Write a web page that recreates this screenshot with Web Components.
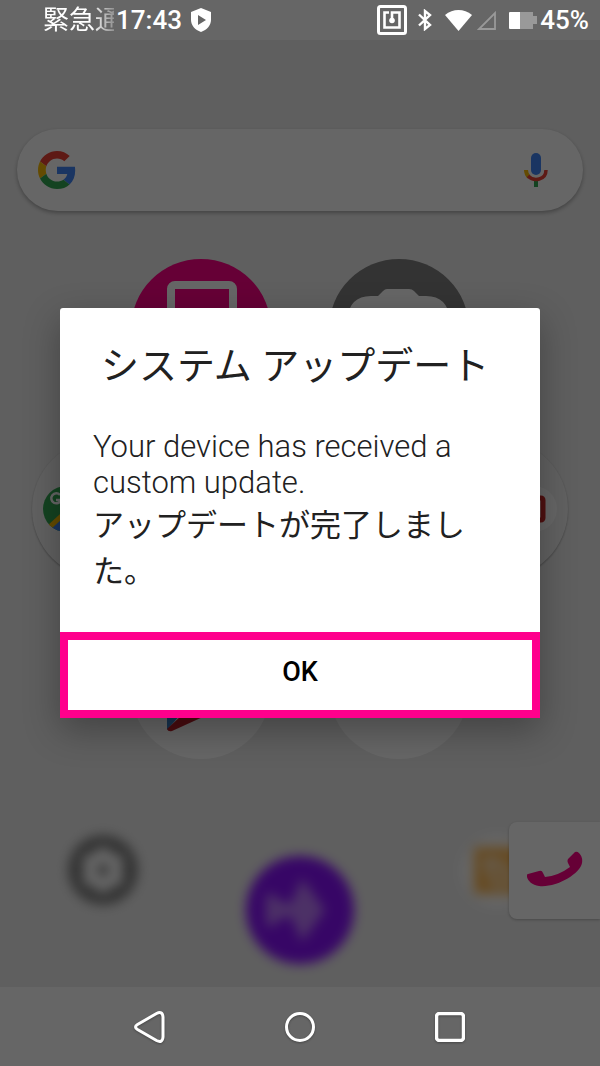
<!DOCTYPE html>
<html lang="ja">
<head>
<meta charset="utf-8">
<meta name="viewport" content="width=device-width, initial-scale=1">
<title>システム アップデート</title>
<style>
  body {
    margin: 0;
    min-height: 100vh;
    display: flex;
    flex-direction: column;
    font-family: Roboto, "Noto Sans CJK JP", sans-serif;
    background: #666;
  }
  main {
    flex: 1;
    display: grid;
    position: relative;
  }
</style>
</head>
<body>
<status-bar time="17:43" battery="45%">緊急通</status-bar>
<main>
  <home-screen></home-screen>
  <update-dialog>
    <span slot="title">システム アップデート</span>
    <span slot="message">Your device has received a custom update.</span>
    <span slot="result">アップデートが完了しました。</span>
    <span slot="action">OK</span>
  </update-dialog>
</main>
<nav-bar></nav-bar>

<script>
class StatusBar extends HTMLElement {
  constructor() {
    super();
    this.attachShadow({ mode: 'open' });
    this.shadowRoot.innerHTML = `
      <style>
        :host {
          display: flex;
          align-items: center;
          justify-content: space-between;
          height: 40px;
          padding: 0 11px 0 43px;
          background: #666;
          color: #fff;
          font-size: 26px;
          font-weight: 500;
          line-height: 40px;
        }
        .side {
          display: flex;
          align-items: center;
        }
        .ticker {
          width: 71px;
          margin-right: 2px;
          overflow: hidden;
          white-space: nowrap;
          font-weight: 400;
          -webkit-mask-image: linear-gradient(to right, #000 48px, transparent 80px);
          mask-image: linear-gradient(to right, #000 48px, transparent 80px);
        }
        .time {
          margin-right: 9px;
        }
        svg {
          display: block;
          flex: none;
        }
        .nfc { margin-right: 11px; }
        .bluetooth { margin-right: 13px; }
        .wifi { margin-right: 5px; }
        .signal { margin-right: 13px; }
        .battery { margin-right: 3px; }
      </style>
      <div class="side">
        <div class="ticker"><slot></slot></div>
        <span class="time"></span>
        <svg width="20" height="24" viewBox="0 0 20 24">
          <path fill="#fff" fill-rule="evenodd" d="M10 0 20 4v8c0 5-4 10-10 12C4 22 0 17 0 12V4zM7 7v10l8-5z"/>
        </svg>
      </div>
      <div class="side">
        <svg class="nfc" width="30" height="30" viewBox="0 0 30 30" fill="none" stroke="#fff">
          <rect x="1.5" y="1.5" width="27" height="27" rx="2" stroke-width="3"/>
          <path stroke-width="2.6" d="M12 7.500H7.500v15h15v-15H15v7"/>
          <circle cx="15" cy="15.500" r="2.800" fill="#fff" stroke="none"/>
        </svg>
        <svg class="bluetooth" width="14" height="22" viewBox="0 0 14 22" fill="none" stroke="#fff" stroke-width="2.400">
          <path d="M1 5.500 12 16l-5 4V2l5 4L1 16.500"/>
        </svg>
        <svg class="wifi" width="27" height="21" viewBox="0 0 27 21">
          <path fill="#fff" d="M0 5C8-1.600 19-1.600 27 5L13.500 21z"/>
        </svg>
        <svg class="signal" width="19" height="19" viewBox="0 0 19 19">
          <path fill="none" stroke="#999" stroke-width="1.800" d="M18 2v16H2z"/>
        </svg>
        <svg class="battery" width="28" height="17" viewBox="0 0 28 17">
          <path fill="#999" d="M1 0h23v4h4v8h-4v5H1z"/>
          <path fill="#fff" d="M1 0h10v17H1a1 1 0 0 1-1-1V1a1 1 0 0 1 1-1z"/>
        </svg>
        <span class="level"></span>
      </div>
    `;
  }
  connectedCallback() {
    this.shadowRoot.querySelector('.time').textContent = this.getAttribute('time');
    this.shadowRoot.querySelector('.level').textContent = this.getAttribute('battery');
  }
}
customElements.define('status-bar', StatusBar);

class SearchPill extends HTMLElement {
  constructor() {
    super();
    this.attachShadow({ mode: 'open' });
    this.shadowRoot.innerHTML = `
      <style>
        :host {
          display: flex;
          align-items: center;
          height: 82px;
          padding: 0 34px 0 21px;
          border-radius: 41px;
          background: #fff;
          box-shadow: 0 2px 4px rgba(0, 0, 0, .3);
        }
        input {
          flex: 1;
          min-width: 0;
          height: 40px;
          margin: 0 12px;
          border: 0;
          outline: 0;
          background: none;
          font: 24px Roboto, "Noto Sans CJK JP", sans-serif;
        }
        button {
          padding: 0;
          border: 0;
          background: none;
        }
        svg {
          display: block;
        }
      </style>
      <svg width="38" height="38" viewBox="0 0 48 48">
        <path fill="#ea4335" d="M24 9.500c3.540 0 6.710 1.220 9.210 3.600l6.850-6.850C35.900 2.380 30.470 0 24 0 14.620 0 6.510 5.380 2.560 13.220l7.980 6.190C12.430 13.720 17.740 9.500 24 9.500z"/>
        <path fill="#4285f4" d="M46.980 24.550c0-1.570-.15-3.090-.38-4.550H24v9.020h12.940c-.58 2.960-2.260 5.480-4.780 7.180l7.730 6c4.510-4.180 7.090-10.360 7.090-17.650z"/>
        <path fill="#fbbc05" d="M10.530 28.590c-.48-1.450-.76-2.990-.76-4.590s.27-3.140.76-4.590l-7.980-6.190C.92 16.460 0 20.120 0 24c0 3.880.92 7.540 2.560 10.780l7.970-6.190z"/>
        <path fill="#34a853" d="M24 48c6.480 0 11.930-2.130 15.890-5.810l-7.730-6c-2.150 1.450-4.920 2.300-8.160 2.300-6.260 0-11.570-4.220-13.470-9.910l-7.980 6.190C6.510 42.620 14.620 48 24 48z"/>
      </svg>
      <input type="search" aria-label="検索">
      <button type="button" aria-label="音声検索">
        <svg width="26" height="36" viewBox="0 0 26 36">
          <rect x="8" y="1" width="10" height="22" rx="5" fill="#4285f4"/>
          <path fill="#34a853" d="M11 28h4v7h-4z"/>
          <path fill="none" stroke="#fbbc05" stroke-width="4" d="M3 18c0 3 1 5 3 7"/>
          <path fill="none" stroke="#ea4335" stroke-width="3.500" d="M5 24c6 6 18 4 18-6"/>
        </svg>
      </button>
    `;
  }
}
customElements.define('search-pill', SearchPill);

// Round launcher shortcut, the artwork comes in through the slot
class AppTile extends HTMLElement {
  constructor() {
    super();
    this.attachShadow({ mode: 'open' });
    this.shadowRoot.innerHTML = `
      <style>
        :host {
          display: block;
        }
        button {
          display: block;
          width: 140px;
          height: 140px;
          padding: 0;
          border: 0;
          border-radius: 50%;
          overflow: hidden;
          background: var(--tile, #fff);
          box-shadow: var(--tile-shadow, none);
        }
      </style>
      <button type="button"><slot></slot></button>
    `;
  }
  connectedCallback() {
    this.shadowRoot.querySelector('button').setAttribute('aria-label', this.getAttribute('label'));
  }
}
customElements.define('app-tile', AppTile);

class HomeScreen extends HTMLElement {
  constructor() {
    super();
    this.attachShadow({ mode: 'open' });
    this.shadowRoot.innerHTML = `
      <style>
        :host {
          display: flex;
          flex-direction: column;
          padding: 89px 0 23px;
          background: #eee;
          overflow: hidden;
        }
        search-pill {
          margin: 0 17px;
        }
        .apps {
          display: flex;
          flex-direction: column;
          gap: 40px;
          padding: 48px 0;
        }
        .row {
          display: flex;
          justify-content: center;
          gap: 58px;
        }
        .call { --tile: #ff0087; }
        .camera { --tile: #808080; }
        .folder {
          --tile: #f2f2f2;
          --tile-shadow: 0 1px 2px rgba(0, 0, 0, .3);
        }
        svg {
          display: block;
        }
        .dock {
          display: flex;
          justify-content: space-between;
          align-items: flex-start;
          height: 128px;
          margin-top: auto;
          padding: 0 65px;
        }
        .dock button {
          padding: 0;
          border: 0;
          background: none;
        }
        .soft {
          overflow: visible;
          filter: blur(6px);
        }
        .assistant {
          align-self: flex-end;
        }
        .edge {
          position: absolute;
          right: 0;
          bottom: 68px;
          display: flex;
          align-items: center;
          justify-content: center;
          width: 91px;
          height: 97px;
          padding: 0 0 4px;
          border: 0;
          border-radius: 8px 0 0 8px;
          background: #fff;
          box-shadow: 0 1px 3px rgba(0, 0, 0, .25);
        }
      </style>
      <search-pill></search-pill>
      <div class="apps">
        <div class="row">
          <app-tile class="call" label="電話">
            <svg width="140" height="140" viewBox="0 0 140 140">
              <rect x="40" y="26" width="62" height="92" rx="4" fill="none" stroke="#fff" stroke-width="8"/>
            </svg>
          </app-tile>
          <app-tile class="camera" label="カメラ">
            <svg width="140" height="140" viewBox="0 0 140 140" fill="#fff">
              <path d="M42 37h7l5-5q2-2 4-2h22q3 0 5 2l5 5h7q22 0 24 24v40H18V61q2-24 24-24z"/>
            </svg>
          </app-tile>
        </div>
        <div class="row">
          <app-tile class="folder" label="Google">
            <svg width="140" height="140" viewBox="0 0 140 140">
              <clipPath id="pin"><circle cx="34" cy="70" r="23"/></clipPath>
              <g clip-path="url(#pin)">
                <path fill="#34a853" d="M10 46h48v48H10z"/>
                <path fill="#4285f4" d="M10 98 60 52v46z"/>
                <path stroke="#fbbc05" stroke-width="5" d="M10 95 60 49"/>
                <path fill="none" stroke="#fff" stroke-width="2.500" d="M28 56a5 5 0 1 0 1 5h-5"/>
              </g>
            </svg>
          </app-tile>
          <app-tile class="folder" label="フォルダ"></app-tile>
          <app-tile class="folder" label="ツール">
            <svg width="140" height="140" viewBox="0 0 140 140">
              <circle cx="106" cy="70" r="23" fill="#fff"/>
              <rect x="94" y="59" width="21" height="22" rx="2" fill="#fff" stroke="#c62828" stroke-width="5"/>
              <path stroke="#777" stroke-width="2" d="M108 66v10M111 63v4M111 73v4"/>
            </svg>
          </app-tile>
        </div>
        <div class="row">
          <app-tile label="Play ストア">
            <svg width="140" height="140" viewBox="0 0 140 140">
              <path fill="#3a80c8" d="M36 40l34 32-34 39z"/>
              <path fill="#b8202a" d="M36 110 50 97h24L41 112q-4 1-5-2z"/>
            </svg>
          </app-tile>
          <app-tile label="アプリ"></app-tile>
        </div>
      </div>
      <div class="dock">
        <button type="button" aria-label="設定">
          <svg class="soft" width="76" height="70" viewBox="0 0 76 70">
            <circle cx="38" cy="34" r="35" fill="#808080"/>
            <path fill="#fff" d="m38 10 9 7 11 4-1 13 1 13-11 4-9 7-9-7-11-4 1-13-1-13 11-4z"/>
            <circle cx="38" cy="34" r="6" fill="#808080"/>
          </svg>
        </button>
        <button class="assistant" type="button" aria-label="アシスタント">
          <svg class="soft" width="108" height="108" viewBox="0 0 108 108">
            <circle cx="54" cy="54" r="54" fill="#8a10ff"/>
            <path fill="#fff" opacity=".45" d="M20 38h6l12 9h7l11-25 23 32-23 32-11-25h-7l-12 9h-6z"/>
          </svg>
        </button>
        <button type="button" aria-label="お知らせ">
          <svg class="soft" width="76" height="70" viewBox="0 0 76 70">
            <circle cx="38" cy="35" r="36" fill="#fff"/>
            <path fill="#ffae3a" opacity=".85" d="M15 11h46v47H15z"/>
            <path fill="none" stroke="#fff" stroke-width="6" opacity=".7" d="M26 24q24 0 24 28M26 25l14 28"/>
          </svg>
        </button>
      </div>
      <button class="edge" type="button" aria-label="発信">
        <svg width="56" height="36" viewBox="0 0 56 36">
          <path fill="#ff0087" d="M1 23 12 20q3-1 4 2l2 4q13-1 25-10l-2-4q-1-2 0-4l7-7q2-1 4 1 4 4 3 10C53 23 29 37 12 35 5 34 1 30 0 26q-1-2 1-3z"/>
        </svg>
      </button>
    `;
  }
}
customElements.define('home-screen', HomeScreen);

class UpdateDialog extends HTMLElement {
  constructor() {
    super();
    this.attachShadow({ mode: 'open' });
    this.shadowRoot.innerHTML = `
      <style>
        :host {
          position: absolute;
          inset: 0;
          display: grid;
          place-items: center;
          padding-bottom: 2px;
          background: rgba(0, 0, 0, .6);
        }
        .dialog {
          width: 80%;
          border-radius: 3px 3px 0 0;
          background: #fff;
          color: #212121;
          box-shadow: 0 12px 36px rgba(0, 0, 0, .3);
        }
        h1 {
          margin: 0;
          padding: 30px 24px 0 41px;
          font-size: 38px;
          font-weight: 400;
          line-height: 56px;
        }
        .body {
          padding: 35px 34px 37px 33px;
          font-size: 31px;
        }
        p {
          margin: 0;
        }
        .message {
          font-weight: 300;
          line-height: 36px;
        }
        .result {
          margin-top: 2px;
          line-height: 46px;
        }
        button {
          display: block;
          width: 100%;
          height: 86px;
          padding: 0 0 6px;
          border: 8px solid #ff008c;
          background: #fff;
          color: #000;
          font: 500 27px Roboto, sans-serif;
        }
      </style>
      <div class="dialog" role="dialog" aria-labelledby="title">
        <h1 id="title"><slot name="title"></slot></h1>
        <div class="body">
          <p class="message"><slot name="message"></slot></p>
          <p class="result"><slot name="result"></slot></p>
        </div>
        <button type="button"><slot name="action"></slot></button>
      </div>
    `;
  }
}
customElements.define('update-dialog', UpdateDialog);

class NavBar extends HTMLElement {
  constructor() {
    super();
    this.attachShadow({ mode: 'open' });
    this.shadowRoot.innerHTML = `
      <style>
        :host {
          display: block;
          background: #666;
        }
        nav {
          display: flex;
          height: 79px;
          padding: 0 12.5%;
        }
        button {
          flex: 1;
          display: flex;
          align-items: center;
          justify-content: center;
          padding: 0;
          border: 0;
          background: none;
        }
        svg {
          fill: none;
          stroke: #fff;
          stroke-width: 3;
          filter: drop-shadow(0 1px 1px rgba(0, 0, 0, .3));
        }
      </style>
      <nav>
        <button type="button" aria-label="戻る">
          <svg width="32" height="32" viewBox="0 0 32 32"><path d="M3.500 13.500 22.500 2.500Q28.500-.5 29 6v20q-.5 6.500-6.500 3.500l-19-11q-4-2.500 0-5z"/></svg>
        </button>
        <button type="button" aria-label="ホーム">
          <svg width="30" height="30" viewBox="0 0 30 30"><circle cx="15" cy="15" r="13.500"/></svg>
        </button>
        <button type="button" aria-label="履歴">
          <svg width="30" height="30" viewBox="0 0 30 30"><rect x="1.500" y="1.500" width="27" height="27" rx="3" stroke-width="3.500"/></svg>
        </button>
      </nav>
    `;
  }
}
customElements.define('nav-bar', NavBar);
</script>
</body>
</html>
